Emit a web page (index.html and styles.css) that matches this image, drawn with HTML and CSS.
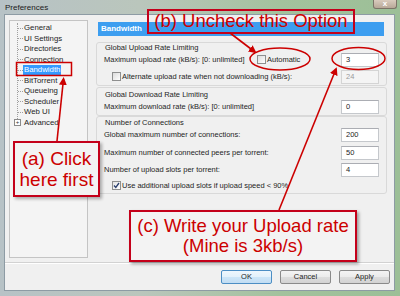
FILE: index.html
```html
<!DOCTYPE html>
<html lang="en">
<head>
    <meta charset="UTF-8">
    <meta name="viewport" content="width=device-width, initial-scale=1.0">
    <title>Preferences</title>
    <link rel="stylesheet" href="styles.css">
</head>
<body>
    <div class="window">
        <div class="titlebar">
            <span class="title">Preferences</span>
            <span class="close">x</span>
        </div>

        <div class="client">
            <div class="main">
                <div class="tree">
                    <ul>
                        <li><span class="stub"></span><span class="item">General</span></li>
                        <li><span class="stub"></span><span class="item">UI Settings</span></li>
                        <li><span class="stub"></span><span class="item">Directories</span></li>
                        <li><span class="stub"></span><span class="item">Connection</span></li>
                        <li><span class="stub"></span><span class="item selected">Bandwidth</span></li>
                        <li><span class="stub"></span><span class="item">BitTorrent</span></li>
                        <li><span class="stub"></span><span class="item">Queueing</span></li>
                        <li><span class="stub"></span><span class="item">Scheduler</span></li>
                        <li><span class="stub"></span><span class="item">Web UI</span></li>
                        <li class="last"><span class="expander">+</span><span class="item">Advanced</span></li>
                    </ul>
                </div>

                <div class="page">
                    <div class="page-head">Bandwidth</div>

                    <div class="group group-upload">
                        <div class="group-title">Global Upload Rate Limiting</div>
                        <div class="row">
                            <span class="label label-fixed">Maximum upload rate (kB/s): [0: unlimited]</span>
                            <span class="check"></span>
                            <span class="check-text">Automatic</span>
                            <span class="field">3</span>
                        </div>
                        <div class="row row-alt">
                            <span class="check indent"></span>
                            <span class="check-text">Alternate upload rate when not downloading (kB/s):</span>
                            <span class="field disabled">24</span>
                        </div>
                    </div>

                    <div class="group group-download">
                        <div class="group-title">Global Download Rate Limiting</div>
                        <div class="row">
                            <span class="label">Maximum download rate (kB/s): [0: unlimited]</span>
                            <span class="field">0</span>
                        </div>
                    </div>

                    <div class="group group-conn">
                        <div class="group-title">Number of Connections</div>
                        <div class="row">
                            <span class="label">Global maximum number of connections:</span>
                            <span class="field">200</span>
                        </div>
                        <div class="row row-peers">
                            <span class="label">Maximum number of connected peers per torrent:</span>
                            <span class="field">50</span>
                        </div>
                        <div class="row row-slots">
                            <span class="label">Number of upload slots per torrent:</span>
                            <span class="field">4</span>
                        </div>
                        <div class="row row-extra">
                            <span class="check indent checked">
                                <svg width="7" height="7" viewBox="0 0 7 7"><path d="M1 3.5 L2.8 5.5 L6 1" fill="none" stroke="#2a3f6e" stroke-width="1.3"/></svg>
                            </span>
                            <span class="check-text">Use additional upload slots if upload speed &lt; 90%</span>
                        </div>
                    </div>
                </div>
            </div>

            <div class="separator"></div>

            <div class="buttons">
                <span class="btn btn-default">OK</span>
                <span class="btn">Cancel</span>
                <span class="btn">Apply</span>
            </div>
        </div>

        <!-- annotations drawn over the dialog -->
        <div class="note note-a">(a) Click<br>here first</div>
        <div class="note note-b">(b) Uncheck this Option</div>
        <div class="note note-c">(c) Write your Upload rate<br>(Mine is 3kb/s)</div>

        <svg class="marks" width="400" height="296" viewBox="0 0 400 296">
            <defs>
                <marker id="head" markerWidth="8" markerHeight="8" refX="6" refY="4" orient="auto" markerUnits="userSpaceOnUse">
                    <path d="M0 0 L8 4 L0 8 Z" fill="#cc0000"/>
                </marker>
            </defs>
            <rect x="16.5" y="62.5" width="55" height="13" fill="none" stroke="#cc0000" stroke-width="1.5"/>
            <ellipse cx="280" cy="59" rx="30" ry="11" fill="none" stroke="#cc0000" stroke-width="1.5"/>
            <ellipse cx="358.5" cy="58.5" rx="26.5" ry="11" fill="none" stroke="#cc0000" stroke-width="1.5"/>
            <line x1="57" y1="141" x2="63.5" y2="79" stroke="#cc0000" stroke-width="1.6" marker-end="url(#head)"/>
            <line x1="230" y1="33" x2="255" y2="52" stroke="#cc0000" stroke-width="1.6" marker-end="url(#head)"/>
            <line x1="279" y1="210" x2="336" y2="69" stroke="#cc0000" stroke-width="1.6" marker-end="url(#head)"/>
        </svg>
    </div>
</body>
</html>
```

FILE: styles.css
```css
* {
    margin: 0;
    padding: 0;
    box-sizing: border-box;
}

body {
    font-family: "Liberation Sans", Arial, sans-serif;
    font-size: 7.5px;
    color: #1e1e1e;
    background: #ffffff;
}

.window {
    position: relative;
    width: 400px;
    height: 296px;
    overflow: hidden;
    background: linear-gradient(90deg, #b7c2c6 0%, #bac6bc 35%, #a3c29d 70%, #9cbf97 100%);
}

/* title bar */
.titlebar {
    height: 14px;
    display: flex;
    align-items: center;
    justify-content: space-between;
    padding-left: 5px;
}

.title {
    font-size: 8px;
    color: #202020;
}

.close {
    width: 24px;
    height: 9px;
    margin-top: -5px;
    margin-right: 3px;
    border: 1px solid #7c7468;
    border-top: none;
    border-radius: 0 0 3px 3px;
    background: linear-gradient(#d9cbbd, #b8a898);
    color: #ffffff;
    font-size: 8px;
    font-weight: bold;
    line-height: 7px;
    text-align: center;
}

/* dialog body */
.client {
    margin-left: 4px;
    width: 391px;
    height: 277px;
    background: #f0f0f0;
    border: 1px solid #8d9ba4;
    display: flex;
    flex-direction: column;
}

.main {
    display: flex;
    padding: 5px 0 0 4px;
    height: 243px;
}

.tree {
    width: 79px;
    height: 238px;
    border: 1px solid #c4c4c4;
    background: #f4f4f4;
    padding: 2px 0 0 7px;
}

.tree ul {
    list-style: none;
    border-left: 1px dotted #a0a0a0;
    height: 100px;
}

.tree li {
    display: flex;
    align-items: center;
    height: 10.5px;
    white-space: nowrap;
    font-size: 7.8px;
}

.stub {
    width: 5px;
    border-top: 1px dotted #a0a0a0;
}

.item {
    padding: 0 1px;
    line-height: 10px;
}

.item.selected {
    background: #3399ff;
    color: #ffffff;
}

.expander {
    width: 7px;
    height: 7px;
    margin-left: -4px;
    margin-right: 2px;
    border: 1px solid #8a8a8a;
    background: #ffffff;
    font-size: 6px;
    line-height: 5px;
    text-align: center;
    color: #333333;
}

.page {
    width: 294px;
    margin-left: 7px;
}

.page-head {
    height: 14px;
    margin: 2px 5px 0 3px;
    background: #3d9ef0;
    color: #ffffff;
    font-size: 8px;
    font-weight: bold;
    line-height: 14px;
    padding-left: 3px;
}

.group {
    margin: 0 2px 0 1px;
    border: 1px solid #d9d9d9;
    border-radius: 3px;
    padding: 0 7px 1px 7px;
}

.group-upload {
    margin-top: 6px;
}

.group-download {
    margin-top: 1px;
    padding-top: 2px;
    padding-bottom: 1px;
}

.group-conn {
    margin-top: 0;
    padding-top: 1px;
}

.group-title {
    height: 9px;
    line-height: 9px;
    padding-left: 1px;
}

.row {
    display: flex;
    align-items: center;
    height: 15px;
    white-space: nowrap;
}

.row-alt {
    margin-top: 2px;
}

.row-peers {
    margin-top: 3px;
}

.row-slots {
    margin-top: 2px;
}

.row-extra {
    height: 14px;
    margin-top: 1px;
}

.label-fixed {
    width: 153px;
}

.check {
    width: 9px;
    height: 9px;
    border: 1px solid #8e8f8f;
    background: linear-gradient(135deg, #dcdcdc, #ffffff);
    display: flex;
    align-items: center;
    justify-content: center;
}

.check.indent {
    margin-left: 8px;
}

.check.checked {
    background: linear-gradient(135deg, #e4e4e4, #ffffff);
}

.check-text {
    margin-left: 1px;
}

.field {
    margin-left: auto;
    width: 38px;
    height: 14px;
    border: 1px solid #c5c8cc;
    border-top-color: #abadb3;
    background: #ffffff;
    padding-left: 4px;
    line-height: 12px;
}

.field.disabled {
    background: #f4f4f4;
    color: #9a9a9a;
    border-color: #d4d4d4;
}

.separator {
    margin-top: 4px;
    border-top: 1px solid #d2d2d2;
    border-bottom: 1px solid #ffffff;
}

.buttons {
    display: flex;
    justify-content: flex-end;
    gap: 8px;
    padding: 6px 4px 0 0;
}

.btn {
    width: 51px;
    height: 14px;
    border: 1px solid #8a8a8a;
    border-radius: 2px;
    background: linear-gradient(#f4f4f4, #ebebeb 50%, #dddddd 51%, #d2d2d2);
    text-align: center;
    line-height: 12px;
}

.btn-default {
    border-color: #4c8ec4;
    background: linear-gradient(#eef7fd, #e3f1fb 50%, #cde6f8 51%, #c1ddf3);
}

/* annotations */
.note {
    position: absolute;
    border: 2px solid #c4001a;
    color: #cc0000;
    font-family: "Liberation Sans", Arial, sans-serif;
    text-align: center;
    white-space: nowrap;
}

.note-a {
    left: 13px;
    top: 141px;
    width: 87px;
    height: 56px;
    padding-top: 5px;
    font-size: 19px;
    line-height: 21px;
    background: #f3f3f3;
    box-shadow: 2px 2px 3px rgba(0, 0, 0, 0.3);
}

.note-b {
    left: 147px;
    top: 9px;
    width: 208px;
    height: 25px;
    font-size: 18.5px;
    line-height: 20px;
}

.note-c {
    left: 129px;
    top: 210px;
    width: 228px;
    height: 52px;
    padding-top: 4px;
    font-size: 18.5px;
    line-height: 20px;
    background: #f3f3f3;
    box-shadow: 2px 2px 3px rgba(0, 0, 0, 0.35);
}

.marks {
    position: absolute;
    left: 0;
    top: 0;
    pointer-events: none;
}
```
